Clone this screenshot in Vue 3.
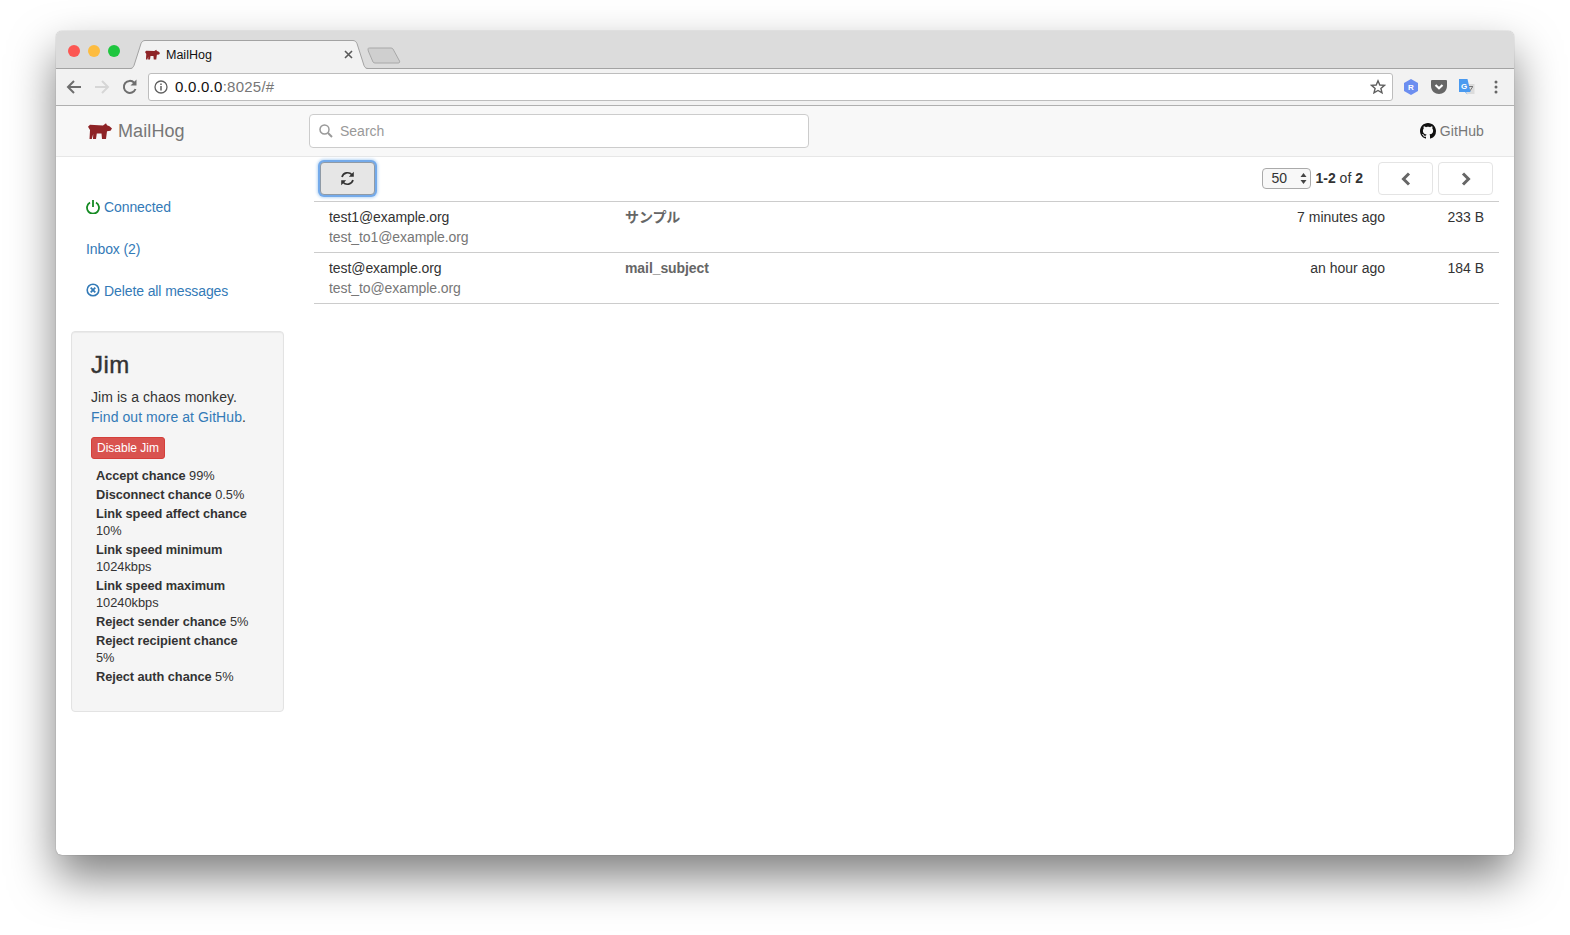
<script setup>
const nav = [
  { key: 'accept', label: 'Accept chance', value: '99%' },
  { key: 'disc', label: 'Disconnect chance', value: '0.5%' },
  { key: 'aff', label: 'Link speed affect chance', value: '10%' },
  { key: 'min', label: 'Link speed minimum', value: '1024kbps' },
  { key: 'max', label: 'Link speed maximum', value: '10240kbps' },
  { key: 'snd', label: 'Reject sender chance', value: '5%' },
  { key: 'rcp', label: 'Reject recipient chance', value: '5%' },
  { key: 'auth', label: 'Reject auth chance', value: '5%' },
]
const messages = [
  { id: 1, from: 'test1@example.org', to: 'test_to1@example.org', subject: 'サンプル', time: '7 minutes ago', size: '233 B' },
  { id: 2, from: 'test@example.org', to: 'test_to@example.org', subject: 'mail_subject', time: 'an hour ago', size: '184 B' },
]
const hog = 'M0 3.800 L2 1.800 L15 2.500 L18 0.300 L19 2.300 L21.500 3.300 L24 5.500 L22.500 7.800 L19 8.300 L18 16 L14 16 L13.500 10.500 L8.800 10.500 L8 16 L5 16 L5.200 11 L3.800 16 L1.500 16 L2 7 Z'
</script>

<template>
  <div class="page">
    <div class="window">
      <header class="titlebar">
        <div class="lights">
          <span class="light red"></span>
          <span class="light amber"></span>
          <span class="light green"></span>
        </div>
        <div class="tab">
          <svg class="tab-shape" width="242" height="30" viewBox="0 0 242 30">
            <path d="M0 29 L2 29 C4 29 5 28 6 26 L13 4 C14 2 15 1 17 1 H225 C227 1 228 2 229 4 L236 26 C237 28 238 29 240 29 H242 Z" fill="#f2f2f2" />
            <path d="M0 28.500 H2 C4 28.500 5 27.500 6 25.500 L13 3.500 C14 1.500 15 0.500 17 0.500 H225 C227 0.500 228 1.500 229 3.500 L236 25.500 C237 27.500 238 28.500 240 28.500 H242" fill="none" stroke="#a3a3a3" />
          </svg>
          <svg class="tab-icon" width="15" height="11" viewBox="0 0 24 16"><path :d="hog" fill="#8e2326" /></svg>
          <span class="tab-title">MailHog</span>
          <svg class="tab-close" width="9" height="9" viewBox="0 0 9 9"><path d="M1 1 L8 8 M8 1 L1 8" stroke="#5a5a5a" stroke-width="1.600" /></svg>
        </div>
        <svg class="new-tab" width="34" height="17" viewBox="0 0 34 17"><path d="M1 2 C1 1.300 1.500 1 2.500 1 H24 C25 1 25.600 1.400 26 2 L32.500 14 C33 15.300 32.500 16 31 16 H8 C7 16 6.500 15.600 6 15 L1.300 4 Z" fill="#cfcfcf" stroke="#a8a8a8" /></svg>
      </header>

      <div class="toolbar">
        <svg class="tool" width="18" height="18" viewBox="0 0 18 18"><path d="M16 9 H3 M9 3 L3 9 L9 15" fill="none" stroke="#6e6e6e" stroke-width="2" /></svg>
        <svg class="tool" width="18" height="18" viewBox="0 0 18 18"><path d="M2 9 H15 M9 3 L15 9 L9 15" fill="none" stroke="#d6d6d6" stroke-width="2" /></svg>
        <svg class="tool" width="18" height="18" viewBox="0 0 18 18"><path d="M14.500 11 A6 6 0 1 1 13.200 4.700" fill="none" stroke="#6e6e6e" stroke-width="2" /><path d="M15.500 1.500 V7.500 H9.500 Z" fill="#6e6e6e" /></svg>
        <div class="omnibox">
          <svg class="info" width="14" height="14" viewBox="0 0 14 14"><circle cx="7" cy="7" r="6" fill="none" stroke="#5f5f5f" stroke-width="1.300" /><path d="M7 6 V10.500 M7 3.500 V5" stroke="#5f5f5f" stroke-width="1.500" /></svg>
          <span class="url"><span class="host">0.0.0.0</span>:8025/#</span>
          <svg class="star" width="16" height="16" viewBox="0 0 16 16"><path d="M8 1.800 L9.800 6 L14.400 6.400 L10.900 9.400 L12 13.900 L8 11.500 L4 13.900 L5.100 9.400 L1.600 6.400 L6.200 6 Z" fill="none" stroke="#5f5f5f" stroke-width="1.400" /></svg>
        </div>
        <div class="extensions">
          <svg width="16" height="18" viewBox="0 0 16 18"><path d="M8 1 L15 5 V13 L8 17 L1 13 V5 Z" fill="#6c8ef0" /><text x="8" y="12" text-anchor="middle" class="ext-r">R</text></svg>
          <svg width="16" height="14" viewBox="0 0 16 14"><path d="M0 1 Q0 0 1 0 H15 Q16 0 16 1 V6 C16 11 12 14 8 14 C4 14 0 11 0 6 Z" fill="#666" /><path d="M4.500 5 L8 8.300 L11.500 5" fill="none" stroke="#fff" stroke-width="2.200" /></svg>
          <svg width="16" height="16" viewBox="0 0 16 16"><path d="M6 5 H15.500 V15 H8 Z" fill="#dcdcdc" /><path d="M10 7.500 H14 M12 7 L12 8 M10.500 12.500 L13.500 8" stroke="#777" stroke-width="1" fill="none" /><path d="M0 0 H8.500 L11.500 13 L7 13 L8.500 15.500 L6 13 H0 Z" fill="#4a9af0" /><text x="5" y="9.500" text-anchor="middle" class="ext-g">G</text></svg>
          <svg width="4" height="14" viewBox="0 0 4 14"><circle cx="2" cy="2" r="1.500" fill="#666" /><circle cx="2" cy="7" r="1.500" fill="#666" /><circle cx="2" cy="12" r="1.500" fill="#666" /></svg>
        </div>
      </div>

      <nav class="navbar">
        <a class="brand">
          <svg width="24" height="16" viewBox="0 0 24 16"><path :d="hog" fill="#8e2326" /></svg>
          <span>MailHog</span>
        </a>
        <div class="search">
          <svg width="14" height="14" viewBox="0 0 14 14"><circle cx="5.500" cy="5.500" r="4.500" fill="none" stroke="#999" stroke-width="1.500" /><path d="M9 9 L13 13" stroke="#999" stroke-width="2" /></svg>
          <span>Search</span>
        </div>
        <a class="github">
          <svg width="16" height="16" viewBox="0 0 16 16"><path d="M8 0C3.580 0 0 3.580 0 8c0 3.540 2.290 6.530 5.470 7.590.4.070.55-.17.55-.38 0-.19-.01-.82-.01-1.490-2.010.37-2.530-.49-2.690-.94-.09-.23-.48-.94-.82-1.130-.28-.15-.68-.52-.01-.53.63-.01 1.080.58 1.230.82.720 1.210 1.870.870 2.330.66.070-.52.280-.87.510-1.070-1.780-.2-3.640-.89-3.640-3.950 0-.87.310-1.590.820-2.150-.08-.2-.36-1.020.080-2.120 0 0 .67-.21 2.200.82.640-.18 1.320-.27 2-.27s1.360.090 2 .27c1.530-1.040 2.200-.82 2.200-.82.440 1.100.160 1.920.080 2.120.510.560.820 1.270.820 2.150 0 3.070-1.870 3.750-3.650 3.950.290.250.540.730.540 1.480 0 1.070-.01 1.930-.01 2.200 0 .210.150.460.550.380A8.010 8.010 0 0 0 16 8c0-4.420-3.580-8-8-8z" fill="#111" /></svg>
          <span>GitHub</span>
        </a>
      </nav>

      <div class="layout">
        <aside class="sidebar">
          <ul class="side-links">
            <li>
              <svg width="14" height="15" viewBox="0 0 14 15"><path d="M4 3.500 A6 6 0 1 0 10 3.500 M7 1 V8" fill="none" stroke="#148a22" stroke-width="1.800" /></svg>
              <span>Connected</span>
            </li>
            <li><span>Inbox (2)</span></li>
            <li>
              <svg width="14" height="14" viewBox="0 0 14 14"><circle cx="7" cy="7" r="5.800" fill="none" stroke="#337ab7" stroke-width="1.600" /><path d="M4.700 4.700 L9.300 9.300 M9.300 4.700 L4.700 9.300" stroke="#337ab7" stroke-width="1.800" /></svg>
              <span>Delete all messages</span>
            </li>
          </ul>
          <section class="well">
            <h3>Jim</h3>
            <p>Jim is a chaos monkey.<br /><a>Find out more at GitHub</a>.</p>
            <button class="danger">Disable Jim</button>
            <ul class="stats">
              <li v-for="n in nav" :key="n.key"><b>{{ n.label }}</b> {{ n.value }}</li>
            </ul>
          </section>
        </aside>

        <main class="content">
          <div class="actions">
            <button class="refresh">
              <svg width="15" height="15" viewBox="0 0 15 15"><path d="M2 6 A5.800 5.800 0 0 1 12 3.800 M13 9 A5.800 5.800 0 0 1 3 11.200" fill="none" stroke="#333" stroke-width="1.700" /><path d="M13.800 0.800 V5.800 H8.800 Z M1.200 14.200 V9.200 H6.200 Z" fill="#333" /></svg>
            </button>
            <div class="pager">
              <div class="select">
                <span class="select-value">50</span>
                <svg width="7" height="13" viewBox="0 0 7 13"><path d="M3.500 1 L6.500 5 H0.500 Z M3.500 12 L6.500 8 H0.500 Z" fill="#444" /></svg>
              </div>
              <span class="count"><b>1-2</b> of <b>2</b></span>
              <button class="page-btn first">
                <svg width="10" height="14" viewBox="0 0 10 14"><path d="M8 1.500 L2.500 7 L8 12.500" fill="none" stroke="#666" stroke-width="3" /></svg>
              </button>
              <button class="page-btn">
                <svg width="10" height="14" viewBox="0 0 10 14"><path d="M2 1.500 L7.500 7 L2 12.500" fill="none" stroke="#666" stroke-width="3" /></svg>
              </button>
            </div>
          </div>
          <div class="messages">
            <div v-for="m in messages" :key="m.id" class="message">
              <div class="col-from">
                <div class="from">{{ m.from }}</div>
                <div class="to">{{ m.to }}</div>
              </div>
              <div class="col-subject">{{ m.subject }}</div>
              <div class="col-time">{{ m.time }}</div>
              <div class="col-size">{{ m.size }}</div>
            </div>
          </div>
        </main>
      </div>
    </div>
  </div>
</template>

<style>
html, body { margin: 0; background: #fff; overflow: hidden; }
</style>

<style scoped>
.page {
  width: 1570px;
  height: 935px;
  box-sizing: border-box;
  padding: 31px 56px 80px 56px;
  font-family: "Liberation Sans", "Noto Sans CJK JP", sans-serif;
  font-size: 14px;
  color: #333;
  overflow: hidden;
}
.window {
  height: 100%;
  background: #fff;
  border-radius: 6px;
  overflow: hidden;
  display: flex;
  flex-direction: column;
  box-shadow: 0 0 1px rgba(0,0,0,.5), 0 22px 45px rgba(0,0,0,.5);
}
.titlebar {
  height: 38px;
  box-sizing: border-box;
  flex: none;
  background: #dcdcdc;
  border-bottom: 1px solid #a3a3a3;
  display: flex;
  align-items: flex-start;
}
.lights { display: flex; gap: 8px; padding: 14px 0 0 12px; width: 72px; box-sizing: border-box; flex: none; }
.light { width: 12px; height: 12px; border-radius: 50%; }
.red { background: #fc5753; }
.amber { background: #fdbc40; }
.green { background: #1fc63f; }
.tab {
  position: relative;
  flex: none;
  width: 242px;
  height: 29px;
  margin-top: 9px;
  display: flex;
  align-items: center;
  padding-left: 17px;
  box-sizing: border-box;
  font-size: 12.500px;
  color: #111;
}
.tab-shape { position: absolute; left: 0; top: 0; }
.tab-icon, .tab-title { position: relative; }
.tab-icon { margin-right: 6px; }
.tab-close { position: absolute; right: 17px; top: 10px; }
.new-tab { margin: 16px 0 0 -3px; }

.toolbar {
  height: 37px;
  flex: none;
  box-sizing: border-box;
  background: #f2f2f2;
  border-bottom: 1px solid #b0b0b0;
  display: flex;
  align-items: center;
  padding: 0 16px 0 9px;
}
.tool { margin-right: 10px; }
.omnibox {
  flex: 1;
  height: 28px;
  background: #fff;
  border: 1px solid #bdbdbd;
  border-radius: 3px;
  box-sizing: border-box;
  display: flex;
  align-items: center;
  padding: 0 6px 0 5px;
  margin-left: -1px;
  font-size: 15px;
}
.info { margin-right: 7px; }
.url { flex: 1; color: #777; letter-spacing: 0.250px; padding-bottom: 1px; }
.host { color: #111; }
.extensions { display: flex; align-items: center; gap: 12px; padding-left: 10px; }
.extensions svg:last-child { margin-left: 7px; }
.ext-r { font: bold 8px "Liberation Sans", sans-serif; fill: #fff; }
.ext-g { font: bold 8px "Liberation Sans", sans-serif; fill: #fff; }

.navbar {
  height: 51px;
  flex: none;
  box-sizing: border-box;
  background: #f8f8f8;
  border-bottom: 1px solid #e7e7e7;
  display: flex;
  align-items: center;
  padding: 0 30px 0 32px;
}
.brand {
  width: 221px;
  display: flex;
  align-items: center;
  gap: 6px;
  font-size: 18px;
  color: #777;
  letter-spacing: 0.100px;
}
.search {
  width: 500px;
  height: 34px;
  box-sizing: border-box;
  background: #fff;
  border: 1px solid #ccc;
  border-radius: 4px;
  display: flex;
  align-items: center;
  gap: 7px;
  padding-left: 9px;
  color: #999;
}
.github {
  margin-left: auto;
  display: flex;
  align-items: center;
  gap: 4px;
  color: #777;
  letter-spacing: 0.100px;
}

.layout { flex: 1; display: flex; min-height: 0; }
.sidebar { width: 258px; flex: none; box-sizing: border-box; padding: 40px 0 0 15px; }
.side-links { list-style: none; margin: 0; padding: 0 0 0 15px; color: #337ab7; letter-spacing: -0.100px; }
.side-links li { height: 42px; display: flex; align-items: flex-start; gap: 4px; line-height: 20px; }
.side-links svg { margin-top: 2px; }
.well {
  width: 213px;
  height: 381px;
  margin-top: 8px;
  box-sizing: border-box;
  padding: 19px;
  background: #f5f5f5;
  border: 1px solid #e3e3e3;
  border-radius: 4px;
  box-shadow: inset 0 1px 1px rgba(0,0,0,.05);
}
.well h3 { margin: 0 0 9px; font-size: 24px; font-weight: 400; line-height: 27px; letter-spacing: 0.500px; -webkit-text-stroke: 0.400px #333; height: 27px; }
.well p { margin: 0 0 10px; line-height: 20px; letter-spacing: 0.070px; }
.well a { color: #337ab7; }
.danger {
  display: block;
  width: 74px;
  height: 22px;
  padding: 0;
  background: #d9534f;
  border: 1px solid #d43f3a;
  border-radius: 3px;
  color: #fff;
  font: 12px/20px "Liberation Sans", sans-serif;
}
.stats { list-style: none; margin: 8px 0 0; padding: 0 8px 0 5px; font-size: 12.800px; line-height: 17px; }
.stats li { margin-bottom: 2px; }
.stats b { font-weight: 700; letter-spacing: -0.060px; }

.content { flex: 1; min-width: 0; padding-right: 15px; }
.actions { height: 44px; display: flex; align-items: flex-start; justify-content: space-between; padding: 5px 6px 0; box-sizing: border-box; }
.refresh {
  width: 55px;
  height: 33px;
  padding: 0;
  background: #e6e6e6;
  border: 1px solid #8f9aa6;
  border-radius: 4px;
  box-shadow: 0 0 0 2px #74aaea, 0 0 3px 3px #bcd8f5;
  display: flex;
  align-items: center;
  justify-content: center;
}
.pager { display: flex; align-items: center; height: 33px; }
.select {
  width: 49px;
  height: 21px;
  box-sizing: border-box;
  border: 1px solid #aaa;
  border-radius: 4px;
  display: flex;
  align-items: center;
  justify-content: space-between;
  padding: 0 3px 0 9px;
  background: #f8f8f8;
}
.select-value { padding-bottom: 1px; }
.count { margin: 0 15px 0 5px; padding-bottom: 1px; }
.page-btn {
  width: 55px;
  height: 33px;
  padding: 0;
  background: #fff;
  border: 1px solid #e4e4e4;
  border-radius: 4px;
  display: flex;
  align-items: center;
  justify-content: center;
}
.page-btn.first { margin-right: 5px; }
.message {
  height: 51px;
  box-sizing: border-box;
  border-top: 1px solid #ccc;
  display: flex;
  padding: 5px 15px 0;
  line-height: 20px;
}
.message:last-child { height: 52px; border-bottom: 1px solid #ccc; }
.col-from { width: 296px; flex: none; letter-spacing: -0.080px; }
.to { color: #777; }
.col-subject { flex: 1; font-weight: 700; color: #666; letter-spacing: -0.080px; }
.col-time { width: 200px; text-align: right; }
.col-size { width: 99px; text-align: right; }
</style>
